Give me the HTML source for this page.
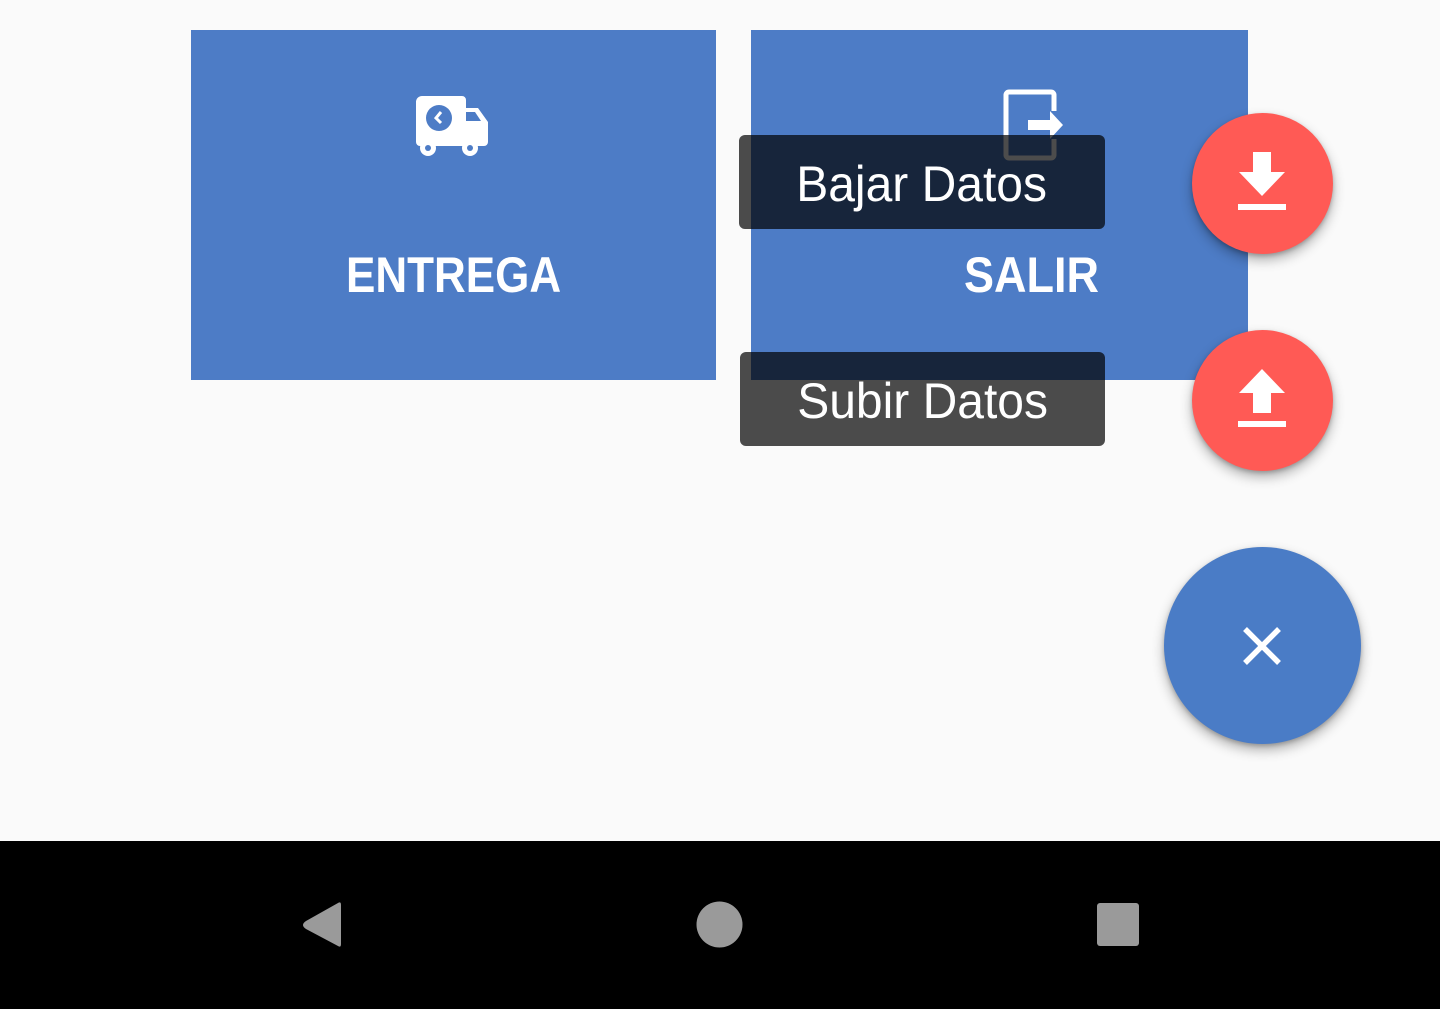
<!DOCTYPE html>
<html><head><meta charset="utf-8"><style>
html,body{margin:0;padding:0;width:1440px;height:1009px;background:#fafafa;overflow:hidden;font-family:"Liberation Sans",sans-serif;position:relative}
.tile{position:absolute;background:#4d7cc6;top:30px;height:350px}
.lbl{position:absolute;color:#fff;font-weight:bold;font-size:50px;line-height:1;white-space:nowrap}
.tip{position:absolute;background:rgba(0,0,0,0.7);border-radius:6px;color:#fff;font-size:50px;line-height:98px;text-align:center}
.fab{position:absolute;border-radius:50%;box-shadow:0 6px 12px rgba(0,0,0,0.3),0 2px 4px rgba(0,0,0,0.2)}
</style></head><body>
<div class="tile" style="left:191px;width:525px"></div>
<div class="tile" style="left:751px;width:497px"></div>
<svg style="position:absolute;left:416px;top:96px" width="74" height="62" viewBox="0 0 74 62">
<path d="M6 0h40a4 4 0 0 1 4 4v8h12l10 14v20a4 4 0 0 1-4 4H4a4 4 0 0 1-4-4V6a6 6 0 0 1 6-6z" fill="#fff"/>
<circle cx="12" cy="52" r="8" fill="#fff"/><circle cx="12" cy="52" r="3" fill="#4d7cc6"/>
<circle cx="54" cy="52" r="8" fill="#fff"/><circle cx="54" cy="52" r="3" fill="#4d7cc6"/>
<circle cx="23" cy="22" r="13" fill="#4d7cc6"/><path d="M25 16l-5 6 5 5" stroke="#fff" stroke-width="3" fill="none"/>
<path d="M50 16h9l6 9h-15z" fill="#4d7cc6"/>
</svg>
<div class="lbl" style="left:346px;top:250px;transform:scaleX(0.88);transform-origin:left">ENTREGA</div>
<svg style="position:absolute;left:1002px;top:89px" width="62" height="72" viewBox="0 0 62 72">
<path d="M52 22V6a3 3 0 0 0-3-3H7a3 3 0 0 0-3 3v60a3 3 0 0 0 3 3h42a3 3 0 0 0 3-3V50" stroke="#fff" stroke-width="5" fill="none"/>
<path d="M26 31h22v-9l13 14-13 14v-9H26z" fill="#fff"/>
</svg>
<div class="lbl" style="left:964px;top:250px;transform:scaleX(0.9);transform-origin:left">SALIR</div>
<div class="tip" style="left:739px;top:135px;width:366px;height:94px"><span style="display:inline-block;transform:scaleX(0.96)">Bajar Datos</span></div>
<div class="tip" style="left:740px;top:352px;width:365px;height:94px"><span style="display:inline-block;transform:scaleX(0.96)">Subir Datos</span></div>
<div class="fab" style="left:1192px;top:113px;width:141px;height:141px;background:#ff5a55"></div>
<svg style="position:absolute;left:1236px;top:152px" width="52" height="60" viewBox="0 0 52 60"><path d="M17 0h18v20h14L26 44 3 20h14z" fill="#fff"/><rect x="2" y="52" width="48" height="6" fill="#fff"/></svg>
<div class="fab" style="left:1192px;top:330px;width:141px;height:141px;background:#ff5a55"></div>
<svg style="position:absolute;left:1236px;top:369px" width="52" height="60" viewBox="0 0 52 60"><path d="M17 44h18V24h14L26 0 3 24h14z" fill="#fff"/><rect x="2" y="52" width="48" height="6" fill="#fff"/></svg>
<div class="fab" style="left:1164px;top:547px;width:197px;height:197px;background:#4a7cc6"></div>
<svg style="position:absolute;left:1241px;top:625px" width="42" height="42" viewBox="0 0 42 42"><path d="M4 4L38 38M38 4L4 38" stroke="#fff" stroke-width="5.5"/></svg>
<div style="position:absolute;left:0;top:841px;width:1440px;height:168px;background:#000"></div>
<svg style="position:absolute;left:0;top:841px" width="1440" height="168">
<path d="M338 62 L306 80 Q300 84 306 88 L338 105 Q341 107 341 103 V64 Q341 60 338 62z" fill="#9a9a9a"/>
<circle cx="719.5" cy="83.5" r="23" fill="#9a9a9a"/>
<rect x="1097" y="62" width="42" height="43" rx="3" fill="#9a9a9a"/>
</svg>
</body></html>
